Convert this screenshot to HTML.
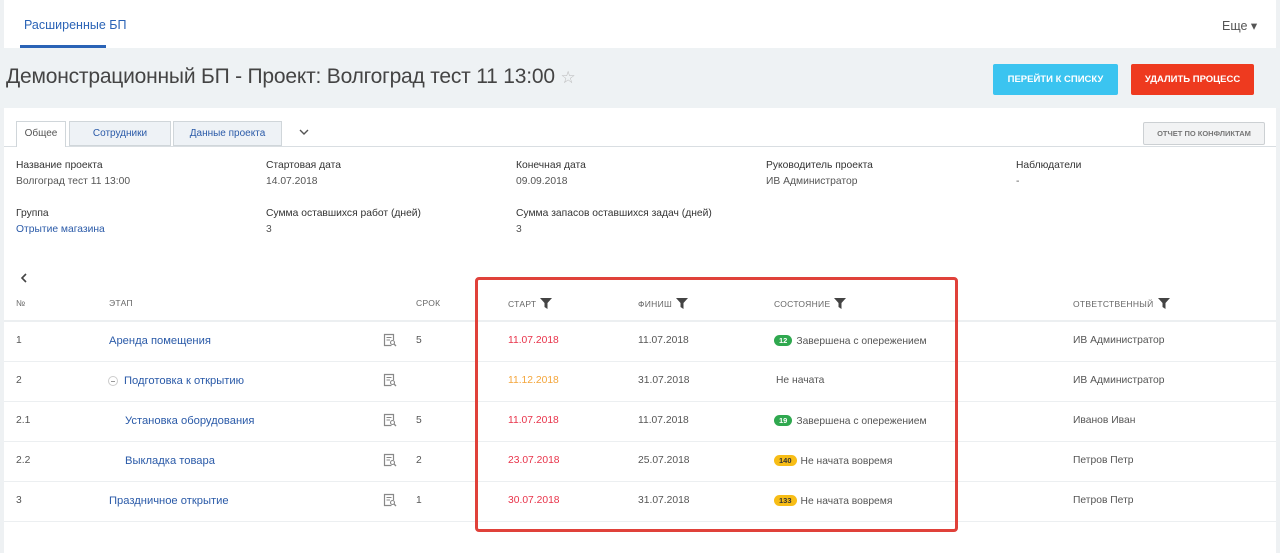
<!DOCTYPE html>
<html><head><meta charset="utf-8"><style>
*{margin:0;padding:0;box-sizing:border-box}
body{width:1280px;height:553px;position:relative;overflow:hidden;background:#fff;font-family:"Liberation Sans",sans-serif;color:#333;font-size:10.3px}
.a{position:absolute;white-space:nowrap}
.lnk{color:#2a5aa8}
.hd{font-size:8.5px;color:#666;letter-spacing:.3px}
.row{position:absolute;left:4px;width:1272px;height:1px;background:#eceff1}
.badge{display:inline-block;border-radius:7px;padding:0 5px;font-size:7.5px;font-weight:bold;line-height:11px;margin-right:4px;vertical-align:1px}
.g{background:#2fa84f;color:#fff}.y{background:#f7bd16;color:#333}
.f{display:inline-block;vertical-align:-2px;margin-left:4px}
.ic{position:absolute}
.t{font-size:11.2px}
</style></head><body>
<div class="a" style="left:0;top:0;width:4px;height:553px;background:#eef1f3"></div>
<div class="a" style="left:1276px;top:0;width:4px;height:553px;background:#eef1f3"></div>
<div class="a lnk" style="left:24px;top:18px;font-size:12.5px;color:#2a63b6">Расширенные БП</div>
<div class="a" style="left:20px;top:45px;width:86px;height:3px;background:#2a63b6"></div>
<div class="a" style="left:1222px;top:18px;font-size:12.5px;color:#555">Еще ▾</div>
<div class="a" style="left:0;top:48px;width:1280px;height:60px;background:#eef2f4"></div>
<div class="a" style="left:6px;top:65px;font-size:21px;color:#444;letter-spacing:-0.2px">Демонстрационный БП - Проект: Волгоград тест 11 13:00 <span style="color:#bbb;font-size:17px">☆</span></div>
<div class="a" style="left:993px;top:64px;width:125px;height:31px;background:#3bc4f0;border-radius:2px;color:#fff;font-size:9.5px;font-weight:bold;text-align:center;line-height:31px">ПЕРЕЙТИ К СПИСКУ</div>
<div class="a" style="left:1131px;top:64px;width:123px;height:31px;background:#ee3a1f;border-radius:2px;color:#fff;font-size:9.5px;font-weight:bold;text-align:center;line-height:31px">УДАЛИТЬ ПРОЦЕСС</div>
<div class="a" style="left:4px;top:146px;width:1272px;height:1px;background:#d9dee2"></div>
<div class="a" style="left:16px;top:121px;width:50px;height:26px;background:#fff;border:1px solid #d0d6da;border-bottom:none;text-align:center;line-height:24px;font-size:10px;color:#555">Общее</div>
<div class="a" style="left:69px;top:121px;width:102px;height:25px;background:#eef2f6;border:1px solid #d0d6da;text-align:center;line-height:24px;font-size:10px;color:#2a5aa8">Сотрудники</div>
<div class="a" style="left:173px;top:121px;width:109px;height:25px;background:#eef2f6;border:1px solid #d0d6da;text-align:center;line-height:24px;font-size:10px;color:#2a5aa8">Данные проекта</div>
<svg class="a" style="left:299px;top:128px" width="10" height="8"><path d="M1 2L5 6L9 2" stroke="#555" stroke-width="1.4" fill="none"/></svg>
<div class="a" style="left:1143px;top:122px;width:122px;height:23px;background:#f2f3f4;border:1px solid #ccd0d3;border-radius:2px;text-align:center;line-height:21px;font-size:7.5px;font-weight:bold;color:#777">ОТЧЕТ ПО КОНФЛИКТАМ</div>
<div class="a" style="left:16px;top:160px">Название проекта</div>
<div class="a" style="left:16px;top:176px;color:#555">Волгоград тест 11 13:00</div>
<div class="a" style="left:266px;top:160px">Стартовая дата</div>
<div class="a" style="left:266px;top:176px;color:#555">14.07.2018</div>
<div class="a" style="left:516px;top:160px">Конечная дата</div>
<div class="a" style="left:516px;top:176px;color:#555">09.09.2018</div>
<div class="a" style="left:766px;top:160px">Руководитель проекта</div>
<div class="a" style="left:766px;top:176px;color:#555">ИВ Администратор</div>
<div class="a" style="left:1016px;top:160px">Наблюдатели</div>
<div class="a" style="left:1016px;top:176px;color:#555">-</div>
<div class="a" style="left:16px;top:208px">Группа</div>
<div class="a lnk" style="left:16px;top:224px">Отрытие магазина</div>
<div class="a" style="left:266px;top:208px">Сумма оставшихся работ (дней)</div>
<div class="a" style="left:266px;top:224px;color:#555">3</div>
<div class="a" style="left:516px;top:208px">Сумма запасов оставшихся задач (дней)</div>
<div class="a" style="left:516px;top:224px;color:#555">3</div>
<svg class="a" style="left:20px;top:273px" width="8" height="10"><path d="M6 1L2 5L6 9" stroke="#444" stroke-width="1.6" fill="none"/></svg>
<div class="a hd" style="left:16px;top:298px">№</div>
<div class="a hd" style="left:109px;top:298px">ЭТАП</div>
<div class="a hd" style="left:416px;top:298px">СРОК</div>
<div class="a hd" style="left:508px;top:298px">СТАРТ<svg class="f" width="12" height="11" viewBox="0 0 12 11"><path d="M0 0H12L7.5 5V11L4.5 9V5Z" fill="#444"/></svg></div>
<div class="a hd" style="left:638px;top:298px">ФИНИШ<svg class="f" width="12" height="11" viewBox="0 0 12 11"><path d="M0 0H12L7.5 5V11L4.5 9V5Z" fill="#444"/></svg></div>
<div class="a hd" style="left:774px;top:298px">СОСТОЯНИЕ<svg class="f" width="12" height="11" viewBox="0 0 12 11"><path d="M0 0H12L7.5 5V11L4.5 9V5Z" fill="#444"/></svg></div>
<div class="a hd" style="left:1073px;top:298px">ОТВЕТСТВЕННЫЙ<svg class="f" width="12" height="11" viewBox="0 0 12 11"><path d="M0 0H12L7.5 5V11L4.5 9V5Z" fill="#444"/></svg></div>
<div class="row" style="top:320px;height:2px"></div>
<div class="row" style="top:361px"></div><div class="row" style="top:401px"></div><div class="row" style="top:441px"></div><div class="row" style="top:481px"></div><div class="row" style="top:521px"></div>

<svg width="0" height="0" style="position:absolute"><defs><symbol id="doc" viewBox="0 0 14 14"><path d="M8.5 12.5H1.5V1.5H10.5V7" stroke="#888" stroke-width="1.2" fill="none"/><path d="M3.5 4.5H8.5M3.5 7H7" stroke="#888" stroke-width="1.1"/><circle cx="9.5" cy="9.5" r="2" stroke="#888" stroke-width="1.1" fill="none"/><path d="M11 11L13 13" stroke="#888" stroke-width="1.3"/></symbol></defs></svg>

<div class="a" style="left:16px;top:335px;color:#555">1</div>
<div class="a lnk t" style="left:109px;top:335px">Аренда помещения</div>
<svg class="ic" style="left:383px;top:333px" width="14" height="14"><use href="#doc"/></svg>
<div class="a" style="left:416px;top:335px;color:#555">5</div>
<div class="a" style="left:508px;top:335px;color:#e8334a">11.07.2018</div>
<div class="a" style="left:638px;top:335px;color:#555">11.07.2018</div>
<div class="a" style="left:774px;top:335px;color:#555"><span class="badge g">12</span>Завершена с опережением</div>
<div class="a" style="left:1073px;top:335px;color:#555">ИВ Администратор</div>

<div class="a" style="left:16px;top:375px;color:#555">2</div>
<div class="a" style="left:108px;top:376px;width:10px;height:10px;border:1px solid #ccc;border-radius:50%"><div style="position:absolute;left:2px;top:4px;width:4px;height:1px;background:#999"></div></div>
<div class="a lnk t" style="left:124px;top:375px">Подготовка к открытию</div>
<svg class="ic" style="left:383px;top:373px" width="14" height="14"><use href="#doc"/></svg>
<div class="a" style="left:508px;top:375px;color:#f4a53a">11.12.2018</div>
<div class="a" style="left:638px;top:375px;color:#555">31.07.2018</div>
<div class="a" style="left:776px;top:375px;color:#555">Не начата</div>
<div class="a" style="left:1073px;top:375px;color:#555">ИВ Администратор</div>

<div class="a" style="left:16px;top:415px;color:#555">2.1</div>
<div class="a lnk t" style="left:125px;top:415px">Установка оборудования</div>
<svg class="ic" style="left:383px;top:413px" width="14" height="14"><use href="#doc"/></svg>
<div class="a" style="left:416px;top:415px;color:#555">5</div>
<div class="a" style="left:508px;top:415px;color:#e8334a">11.07.2018</div>
<div class="a" style="left:638px;top:415px;color:#555">11.07.2018</div>
<div class="a" style="left:774px;top:415px;color:#555"><span class="badge g">19</span>Завершена с опережением</div>
<div class="a" style="left:1073px;top:415px;color:#555">Иванов Иван</div>

<div class="a" style="left:16px;top:455px;color:#555">2.2</div>
<div class="a lnk t" style="left:125px;top:455px">Выкладка товара</div>
<svg class="ic" style="left:383px;top:453px" width="14" height="14"><use href="#doc"/></svg>
<div class="a" style="left:416px;top:455px;color:#555">2</div>
<div class="a" style="left:508px;top:455px;color:#e8334a">23.07.2018</div>
<div class="a" style="left:638px;top:455px;color:#555">25.07.2018</div>
<div class="a" style="left:774px;top:455px;color:#555"><span class="badge y">140</span>Не начата вовремя</div>
<div class="a" style="left:1073px;top:455px;color:#555">Петров Петр</div>

<div class="a" style="left:16px;top:495px;color:#555">3</div>
<div class="a lnk t" style="left:109px;top:495px">Праздничное открытие</div>
<svg class="ic" style="left:383px;top:493px" width="14" height="14"><use href="#doc"/></svg>
<div class="a" style="left:416px;top:495px;color:#555">1</div>
<div class="a" style="left:508px;top:495px;color:#e8334a">30.07.2018</div>
<div class="a" style="left:638px;top:495px;color:#555">31.07.2018</div>
<div class="a" style="left:774px;top:495px;color:#555"><span class="badge y">133</span>Не начата вовремя</div>
<div class="a" style="left:1073px;top:495px;color:#555">Петров Петр</div>

<div class="a" style="left:475px;top:277px;width:483px;height:255px;border:3px solid #e0413a;border-radius:4px"></div>
</body></html>
